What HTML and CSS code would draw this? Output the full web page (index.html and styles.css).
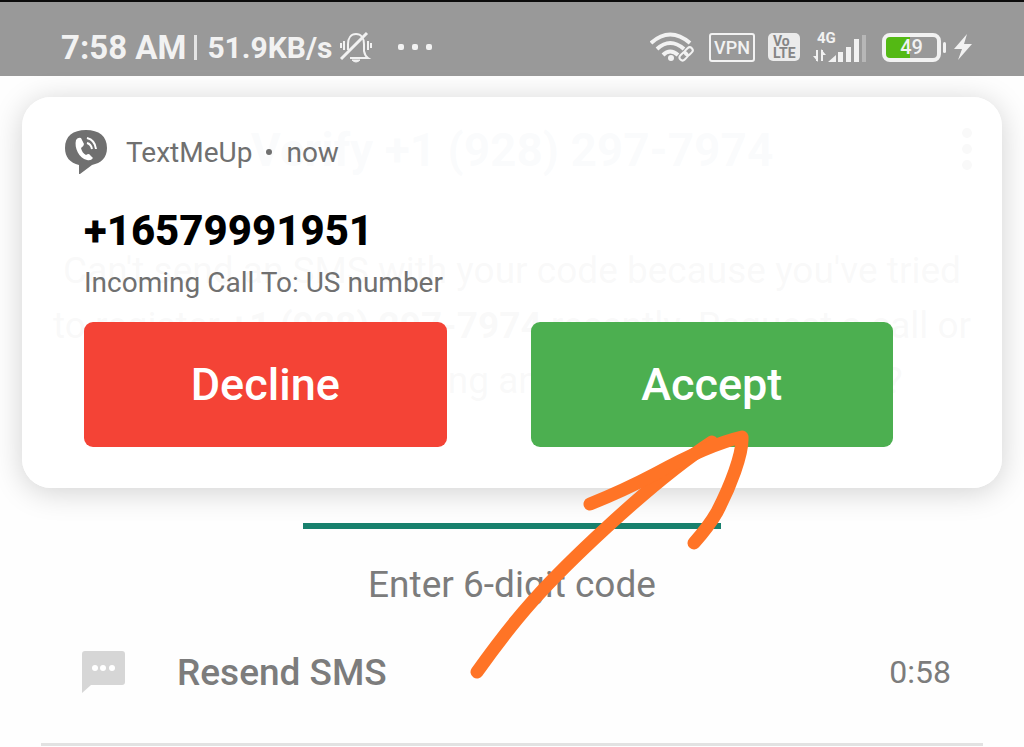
FILE: index.html
```html
<!DOCTYPE html>
<html lang="en">
<head>
    <meta charset="UTF-8">
    <meta name="viewport" content="width=device-width, initial-scale=1.0">
    <title>Verify number</title>
    <link rel="stylesheet" href="styles.css">
</head>
<body>
    <div class="statusbar">
        <div class="status-left">
            <span class="clock">7:58 AM</span>
            <span class="divider"></span>
            <span class="speed">51.9KB/s</span>
            <svg class="bell" width="34" height="32" viewBox="0 0 34 32" fill="none" stroke="#f2f2f2" stroke-width="2">
                <path d="M9 19V13C9 7 12 3 17 3s8 4 8 10v7q1 5 4 7H11"/>
                <path d="M2 28 28 2" stroke-width="3"/>
                <path d="M5 10v9M2 12v5M29 10v9M32 12v5"/>
                <path d="M13 29h8q-4 4-8 0z" fill="#f2f2f2" stroke-width="1"/>
            </svg>
            <span class="dots"><i></i><i></i><i></i></span>
        </div>
        <div class="status-right">
            <svg class="wifi" width="46" height="32" viewBox="0 0 46 32" fill="none" stroke="#f2f2f2" stroke-width="4">
                <path d="M1 12Q20-5 40 12"/>
                <path d="M7 18Q20 6 34 18"/>
                <path d="M13 24Q20 17 28 24"/>
                <circle cx="21" cy="27" r="3" fill="#f2f2f2" stroke="none"/>
                <g stroke-width="2">
                    <rect x="36" y="16" width="6" height="9" rx="3" transform="rotate(45 39 20)"/>
                    <rect x="31" y="21" width="6" height="9" rx="3" transform="rotate(45 34 25)"/>
                </g>
            </svg>
            <span class="vpn">VPN</span>
            <span class="volte"><span>Vo</span><span>LTE</span></span>
            <span class="signal">
                <span>4G</span>
                <svg width="54" height="28" viewBox="0 0 54 28" fill="#f2f2f2">
                    <path d="M4 15v11M9 26V15" stroke="#f2f2f2" stroke-width="2"/>
                    <path d="m0 21 5 6v-6zM8 14v6h5z"/>
                    <path d="M15 27l8-7v7zM25 17h5v10h-5zM33 12h5v15h-5zM41 4h5v23h-5z"/>
                    <path d="M49 0h4v27h-4z" opacity=".35"/>
                </svg>
            </span>
            <span class="battery">49</span>
            <svg class="bolt" width="18" height="28" viewBox="0 0 18 28" fill="#f2f2f2">
                <path d="M13 1 0 16h8L4 27 18 11h-8z"/>
            </svg>
        </div>
    </div>

    <main class="verify">
        <header class="verify-head">
            <h1>Verify +1 (928) 297-7974</h1>
            <div class="more"><i></i><i></i><i></i></div>
        </header>
        <p class="info">Can't send an SMS with your code because you've tried<br>to register <b>+1 (928) 297-7974</b> recently. Request a call or<br>wait before requesting an SMS. Wrong number?</p>
        <input class="code" id="code" type="text" inputmode="numeric" maxlength="6">
        <label class="hint" for="code">Enter 6-digit code</label>
        <div class="resend">
            <svg width="43" height="42" viewBox="0 0 43 42">
                <path d="M3 0h37q3 0 3 3v28q0 3-3 3H9l-9 8V3q0-3 3-3z" fill="#d6d6d6"/>
                <g fill="#fff"><circle cx="13" cy="17" r="3"/><circle cx="21" cy="17" r="3"/><circle cx="30" cy="17" r="3"/></g>
            </svg>
            <span class="resend-label">Resend SMS</span>
            <span class="timer">0:58</span>
        </div>
    </main>

    <section class="call">
        <div class="call-app">
            <svg width="42" height="44" viewBox="0 0 42 44">
                <path d="M21 0C34 0 42 6 42 18c0 10-6 15-15 17L15 44q-1 1-1-1v-8C5 33 0 27 0 18 0 6 8 0 21 0z" fill="#707070"/>
                <path d="M11 10q2-3 5-2l3 6q0 2-3 4 1 5 5 7 3-2 4 0l3 3q-2 3-6 2C14 28 9 18 11 10z" fill="#fff"/>
                <path d="M22 8q8 2 9 11M22 13q4 1 5 6" fill="none" stroke="#fff" stroke-width="2"/>
            </svg>
            <span>TextMeUp</span>
            <i class="sep"></i>
            <span>now</span>
        </div>
        <div class="call-body">
            <h2>+16579991951</h2>
            <p>Incoming Call To: US number</p>
            <div class="call-actions">
                <button class="decline" type="button">Decline</button>
                <button class="accept" type="button">Accept</button>
            </div>
        </div>
    </section>

    <svg class="arrow" width="290" height="260" viewBox="466 426 290 260" fill="none" stroke="#ff7426" stroke-width="13" stroke-linecap="round" stroke-linejoin="round">
        <path d="M477 672C516 617 545 584 607 527C645 492 683 461 712 442"/>
        <path d="M590 504C620 492 636 484 655 474C684 458 716 443 742 437C743 454 730 487 717 512Q709 526 694 543"/>
    </svg>
</body>
</html>
```

FILE: styles.css
```css
* {
    box-sizing: border-box;
}

body {
    margin: 0;
    position: relative;
    background: #fefefe;
    font-family: Roboto, "Liberation Sans", sans-serif;
    color: #7c7c7c;
}

h1, h2, p {
    margin: 0;
}

/* status bar */
.statusbar {
    display: flex;
    justify-content: space-between;
    height: 76px;
    padding: 16px 52px 0 61px;
    border-top: 2px solid #0c0c0c;
    background: #999;
    color: #f2f2f2;
}

.status-left, .status-right {
    display: flex;
    align-items: center;
}

.clock {
    font-size: 33px;
    font-weight: 700;
}

.divider {
    width: 3px;
    height: 25px;
    margin: 0 10px 0 8px;
    background: #e4e4e4;
}

.speed {
    font-size: 30px;
    font-weight: 700;
}

.bell {
    margin-left: 7px;
}

.dots {
    display: flex;
    gap: 8px;
    margin-left: 25px;
}

.dots i {
    width: 6px;
    height: 6px;
    border-radius: 2px;
    background: #f2f2f2;
}

.vpn {
    width: 46px;
    height: 29px;
    margin-left: 13px;
    border: 2px solid #f2f2f2;
    border-radius: 3px;
    font-size: 18px;
    font-weight: 500;
    line-height: 26px;
    text-align: center;
}

.volte {
    display: flex;
    flex-direction: column;
    width: 32px;
    height: 28px;
    margin-left: 13px;
    padding: 2px 0 0 5px;
    border-radius: 5px;
    background: #ebebeb;
    color: #858585;
    font-size: 14px;
    font-weight: 700;
    line-height: 12px;
}

.signal {
    display: flex;
    position: relative;
    align-items: flex-end;
    height: 32px;
    margin-left: 13px;
}

.signal span {
    position: absolute;
    top: 0;
    left: 4px;
    font-size: 15px;
    font-weight: 700;
    line-height: 15px;
}

.battery {
    position: relative;
    width: 59px;
    height: 29px;
    margin-left: 15px;
    border: 4px solid #f2f2f2;
    border-radius: 8px;
    background: linear-gradient(90deg, #54b914 24px, #999 24px);
    font-size: 20px;
    font-weight: 500;
    line-height: 21px;
    text-align: center;
}

.battery::after {
    content: "";
    position: absolute;
    top: 5px;
    right: -9px;
    width: 3px;
    height: 11px;
    border-radius: 2px;
    background: #f2f2f2;
}

.bolt {
    margin-left: 13px;
}

/* verification screen */
.verify {
    display: flex;
    flex-direction: column;
    align-items: center;
    padding: 0 41px;
}

.verify-head {
    position: relative;
    width: 100%;
    height: 148px;
    text-align: center;
}

.verify-head h1 {
    color: #7d8fa8;
    font-size: 46px;
    font-weight: 700;
    line-height: 148px;
}

.more {
    display: flex;
    position: absolute;
    top: 52px;
    right: 11px;
    flex-direction: column;
    gap: 6px;
}

.more i {
    width: 10px;
    height: 10px;
    border-radius: 50%;
    background: #606060;
}

.info {
    margin-top: 19px;
    color: #606060;
    font-size: 37px;
    line-height: 55px;
    text-align: center;
    white-space: nowrap;
}

.code {
    width: 418px;
    height: 81px;
    margin-top: 40px;
    border: 0;
    border-bottom: 6px solid #17806d;
    background: none;
    font-size: 45px;
    text-align: center;
    outline: none;
}

.hint {
    margin-top: 32px;
    font-size: 37px;
    line-height: 48px;
}

.resend {
    display: flex;
    align-items: center;
    width: 100%;
    height: 137px;
    padding: 0 32px 8px 41px;
    border-bottom: 3px solid #e2e2e2;
}

.resend-label {
    margin-left: 52px;
    font-size: 37px;
    font-weight: 500;
}

.timer {
    margin-left: auto;
    font-size: 32px;
}

/* incoming call banner */
.call {
    position: absolute;
    top: 97px;
    left: 22px;
    right: 22px;
    padding: 33px 43px 41px;
    border-radius: 29px;
    background: rgba(255, 255, 255, 0.96);
    box-shadow: 0 4px 30px rgba(0, 0, 0, 0.18);
}

.call-app {
    display: flex;
    align-items: center;
    height: 44px;
    color: #707070;
    font-size: 28px;
}

.call-app svg {
    margin-right: 19px;
}

.sep {
    width: 6px;
    height: 6px;
    margin: 0 14px;
    border-radius: 50%;
    background: #707070;
}

.call-body {
    padding: 32px 66px 0 19px;
}

.call-body h2 {
    color: #000;
    font-size: 42px;
    font-weight: 800;
    line-height: 50px;
}

.call-body p {
    color: #707070;
    font-size: 28px;
    line-height: 54px;
}

.call-actions {
    display: grid;
    grid-template-columns: 1fr 1fr;
    gap: 84px;
    margin-top: 12px;
}

.call-actions button {
    height: 125px;
    border: 0;
    border-radius: 9px;
    color: #fff;
    font-family: inherit;
    font-size: 45px;
    font-weight: 500;
}

.decline {
    background: #f44336;
}

.accept {
    background: #4caf50;
}

/* hand-drawn pointer */
.arrow {
    position: absolute;
    top: 426px;
    left: 466px;
    pointer-events: none;
}
```
